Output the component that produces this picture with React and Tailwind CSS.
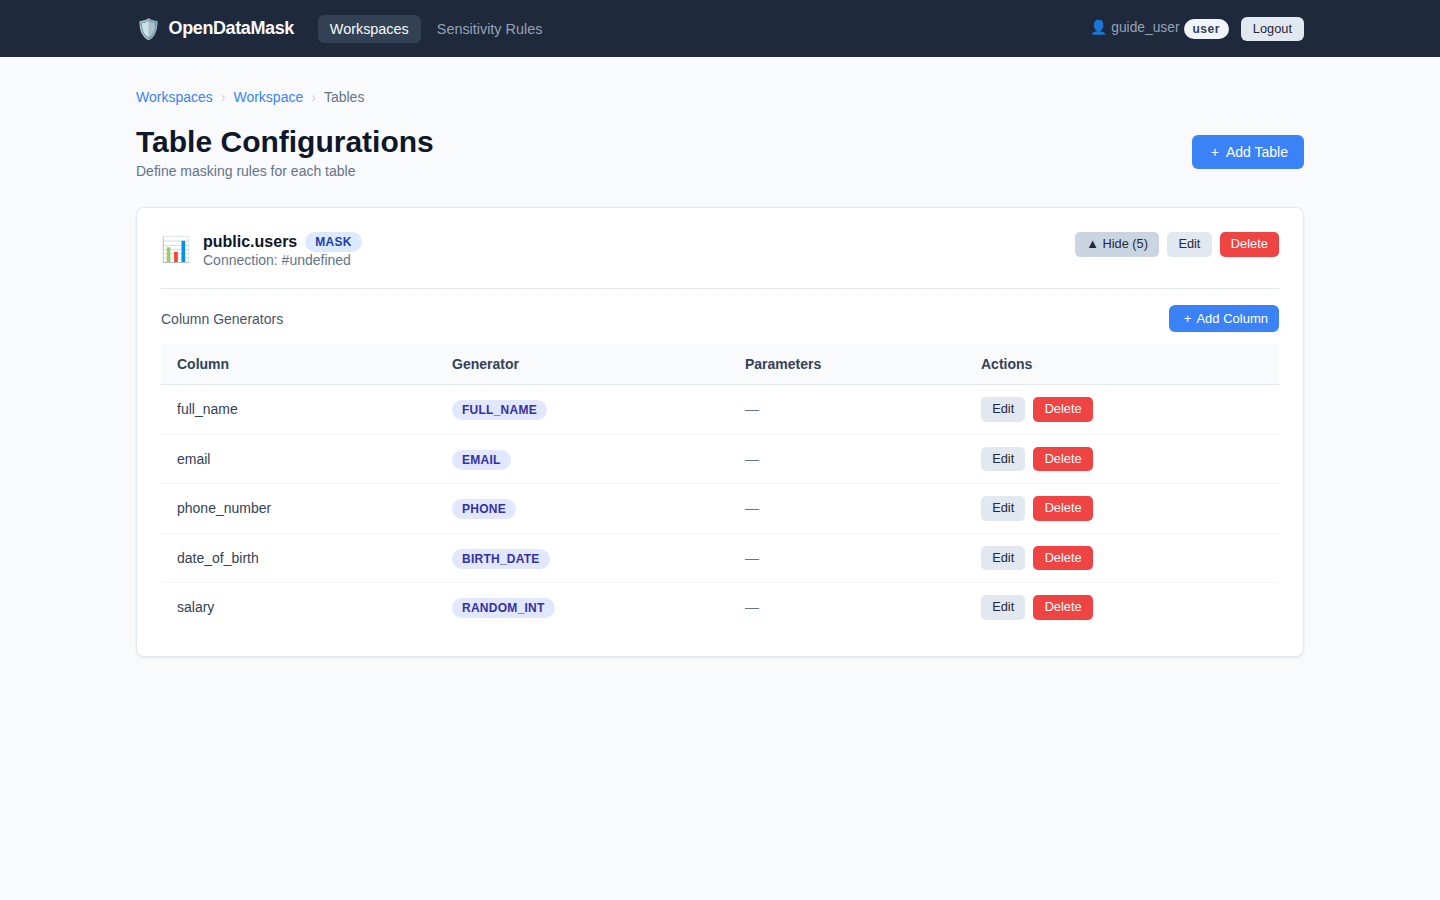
const rows = [
  ["full_name", "FULL_NAME"],
  ["email", "EMAIL"],
  ["phone_number", "PHONE"],
  ["date_of_birth", "BIRTH_DATE"],
  ["salary", "RANDOM_INT"],
];

function SmallButton({ className, children }) {
  return (
    <button className={"rounded-[5px] px-[11.2px] py-[5px] text-[12.8px] leading-[14.5px] " + className}>
      {children}
    </button>
  );
}

function App() {
  return (
    <div className="min-h-screen bg-[#f8fafc] font-['Liberation_Sans',sans-serif] text-[#1e293b]">
      <nav className="h-[57px] bg-[#1e293b]">
        <div className="mx-auto flex h-full w-[1168px] items-center justify-between">
          <div className="flex items-center">
            <div className="flex items-center gap-2 text-[18px] font-bold tracking-[-0.4px] text-[#f8fafc]">
              <span className="text-[20px] leading-none">🛡️</span>
              <span>OpenDataMask</span>
            </div>
            <div className="ml-6 flex gap-1 text-[14.4px] leading-4">
              <a className="rounded-md bg-[#334155] px-3 py-[6px] text-[#f8fafc]">Workspaces</a>
              <a className="rounded-md px-3 py-[6px] text-[#94a3b8]">Sensitivity Rules</a>
            </div>
          </div>
          <div className="flex items-center">
            <span className="text-[13.8px] text-[#94a3b8]">👤 guide_user</span>
            <span className="ml-1 rounded-full bg-[#f1f5f9] px-[9px] py-[2px] text-xs font-bold tracking-[0.5px] text-[#334155]">user</span>
            <button className="ml-3 rounded-md bg-[#e2e8f0] px-3 py-[5px] text-[12.8px] leading-[14px] text-[#1e293b]">Logout</button>
          </div>
        </div>
      </nav>

      <main className="mx-auto w-[1168px] pt-8">
        <div className="flex items-center gap-2 text-sm leading-4 text-[#64748b]">
          <a className="text-[#3b82f6]">Workspaces</a>
          <span className="text-[#cbd5e1]">›</span>
          <a className="text-[#3b82f6]">Workspace</a>
          <span className="text-[#cbd5e1]">›</span>
          <span>Tables</span>
        </div>

        <div className="mt-[19px] flex items-center justify-between">
          <div>
            <h1 className="text-[30px] leading-[36px] font-bold text-[#0f172a]">Table Configurations</h1>
            <p className="mt-[3px] text-sm leading-4 text-[#64748b]">Define masking rules for each table</p>
          </div>
          <button className="flex items-center gap-[7px] rounded-md bg-[#3b82f6] py-[9px] pr-4 pl-[18.5px] text-sm leading-4 text-white">
            <span>+</span>
            <span>Add Table</span>
          </button>
        </div>

        <section className="mt-[28px] rounded-lg border border-[#e2e8f0] bg-white p-6 shadow-[0_1px_3px_rgba(0,0,0,0.08)]">
          <div className="flex items-start justify-between border-b border-[#e2e8f0] pb-5">
            <div className="flex items-center gap-3">
              <span className="text-2xl leading-none">📊</span>
              <div>
                <div className="flex items-center gap-2">
                  <span className="text-base leading-[18px] font-bold text-[#0f172a]">public.users</span>
                  <span className="rounded-full bg-[#dbeafe] px-[10px] py-[2px] text-xs font-bold tracking-[0.25px] text-[#1e40af]">MASK</span>
                </div>
                <div className="text-sm leading-4 text-[#64748b]">Connection: #undefined</div>
              </div>
            </div>
            <div className="flex gap-2">
              <SmallButton className="bg-[#cbd5e1] text-[#1e293b]">▲ Hide (5)</SmallButton>
              <SmallButton className="bg-[#e2e8f0] text-[#1e293b]">Edit</SmallButton>
              <SmallButton className="bg-[#ef4444] text-white">Delete</SmallButton>
            </div>
          </div>

          <div className="mt-4 mb-3 flex items-center justify-between">
            <span className="text-sm text-[#475569]">Column Generators</span>
            <button className="flex items-center gap-[5px] rounded-md bg-[#3b82f6] py-[6px] pr-[11px] pl-[14.5px] text-[13px] leading-[15px] text-white">
              <span>+</span>
              <span>Add Column</span>
            </button>
          </div>

          <table className="w-full table-fixed border-collapse text-sm">
            <thead>
              <tr className="border-b border-[#e2e8f0] bg-[#f8fafc] text-left text-[#334155]">
                <th className="w-[275px] px-4 py-3 leading-4 font-bold">Column</th>
                <th className="w-[293px] px-4 py-3 leading-4 font-bold">Generator</th>
                <th className="w-[236px] px-4 py-3 leading-4 font-bold">Parameters</th>
                <th className="px-4 py-3 leading-4 font-bold">Actions</th>
              </tr>
            </thead>
            <tbody>
              {rows.map(([name, gen]) => (
                <tr key={name} className="border-b border-[#f1f5f9] text-[#334155] last:border-b-0">
                  <td className="px-4 py-3">{name}</td>
                  <td className="px-4 py-3">
                    <span className="rounded-full bg-[#e0e7ff] px-[10px] py-[3px] text-xs font-bold tracking-[0.25px] text-[#3730a3]">{gen}</span>
                  </td>
                  <td className="px-4 py-3 text-[#64748b]">—</td>
                  <td className="px-4 py-3">
                    <div className="flex gap-2">
                      <SmallButton className="bg-[#e2e8f0] text-[#1e293b]">Edit</SmallButton>
                      <SmallButton className="bg-[#ef4444] text-white">Delete</SmallButton>
                    </div>
                  </td>
                </tr>
              ))}
            </tbody>
          </table>
        </section>
      </main>
    </div>
  );
}

export default App;
